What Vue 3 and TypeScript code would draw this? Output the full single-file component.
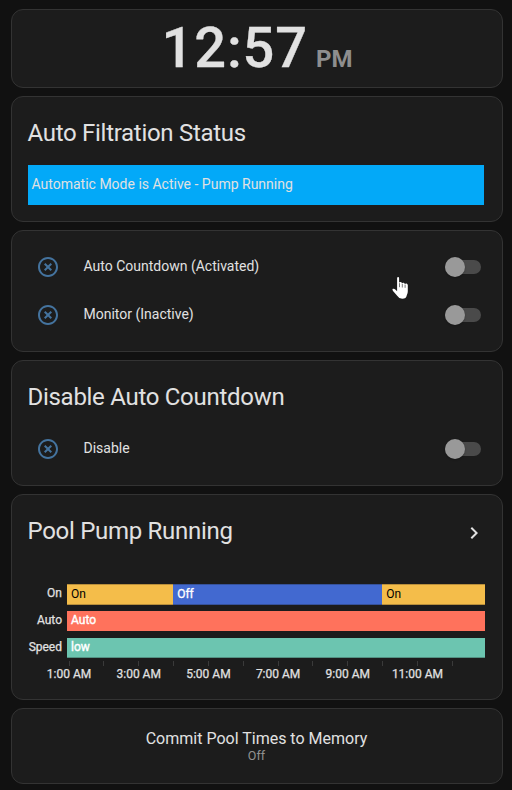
<script setup lang="ts">
interface ToggleRow {
  label: string
}
interface Segment {
  state: string
  span: number
  tone: string
}
interface Track {
  name: string
  segments: Segment[]
}

const filtrationRows: ToggleRow[] = [
  { label: 'Auto Countdown (Activated)' },
  { label: 'Monitor (Inactive)' },
]
const disableRows: ToggleRow[] = [{ label: 'Disable' }]

const tracks: Track[] = [
  {
    name: 'On',
    segments: [
      { state: 'On', span: 25.4, tone: 'amber' },
      { state: 'Off', span: 50, tone: 'blue' },
      { state: 'On', span: 24.6, tone: 'amber' },
    ],
  },
  { name: 'Auto', segments: [{ state: 'Auto', span: 100, tone: 'coral' }] },
  { name: 'Speed', segments: [{ state: 'low', span: 100, tone: 'teal' }] },
]

const ticks: string[] = [
  '1:00 AM', '', '3:00 AM', '', '5:00 AM', '', '7:00 AM', '', '9:00 AM', '', '11:00 AM', '',
]

const closeCircle =
  'M12,20C7.59,20 4,16.41 4,12C4,7.59 7.59,4 12,4C16.41,4 20,7.59 20,12C20,16.41 16.41,20 12,20M12,2C6.47,2 2,6.47 2,12C2,17.53 6.47,22 12,22C17.53,22 22,17.53 22,12C22,6.47 17.53,2 12,2M14.59,8L12,10.59L9.41,8L8,9.41L10.59,12L8,14.59L9.41,16L12,13.41L14.59,16L16,14.59L13.41,12L16,9.41L14.59,8Z'
</script>

<template>
  <main class="dashboard">
    <section class="card clock">
      <span class="time">12:57</span>
      <span class="period">PM</span>
    </section>

    <section class="card status">
      <h2 class="title">Auto Filtration Status</h2>
      <div class="banner">Automatic Mode is Active - Pump Running</div>
    </section>

    <section class="card toggles">
      <div v-for="row in filtrationRows" :key="row.label" class="row">
        <svg class="state-icon" viewBox="0 0 24 24"><path :d="closeCircle" /></svg>
        <span class="row-label">{{ row.label }}</span>
        <span class="switch"><i class="knob"></i></span>
      </div>
    </section>

    <section class="card disable">
      <h2 class="title">Disable Auto Countdown</h2>
      <div v-for="row in disableRows" :key="row.label" class="row">
        <svg class="state-icon" viewBox="0 0 24 24"><path :d="closeCircle" /></svg>
        <span class="row-label">{{ row.label }}</span>
        <span class="switch"><i class="knob"></i></span>
      </div>
    </section>

    <section class="card history">
      <header class="history-head">
        <h2 class="title">Pool Pump Running</h2>
        <svg class="chevron" viewBox="0 0 24 24">
          <path d="M8.59,16.58L13.17,12L8.59,7.41L10,6L16,12L10,18L8.59,16.58Z" />
        </svg>
      </header>
      <div class="chart">
        <div v-for="track in tracks" :key="track.name" class="track">
          <span class="track-name">{{ track.name }}</span>
          <div class="track-bar">
            <span
              v-for="(segment, i) in track.segments"
              :key="i"
              class="segment"
              :class="segment.tone"
              :style="{ width: segment.span + '%' }"
            >{{ segment.state }}</span>
          </div>
        </div>
        <div class="axis">
          <div v-for="(tick, i) in ticks" :key="i" class="tick">
            <i class="tick-mark"></i>
            <span class="tick-label">{{ tick }}</span>
          </div>
        </div>
      </div>
    </section>

    <section class="card commit">
      <span class="commit-name">Commit Pool Times to Memory</span>
      <span class="commit-state">Off</span>
    </section>

    <svg class="pointer" viewBox="0 0 18 24">
      <path
        d="M5.1 2.2Q5.1 1 6.1 1T7.1 2.2V6.6Q7.5 6 8.6 6.1T9.9 7.2Q10.6 6.5 11.6 6.8T12.9 8.1Q13.6 7.2 14.5 7.5T15.8 9.1V15.2Q15.8 17.5 14.8 19.2Q14.3 22.8 10.2 22.8Q7 22.8 5.4 20L1 14.9Q-.1 13.2 1 12.8Q2.2 12.4 3.6 13.8L5.1 15.3Z"
      />
      <path class="finger-gap" d="M7.5 7.2V11.2M10.3 7.8V11.5M13.1 8.6V11.8" />
    </svg>
  </main>
</template>

<style>
body {
  margin: 0;
  background: #111111;
}
</style>

<style scoped>
.dashboard {
  position: relative;
  box-sizing: border-box;
  width: 512px;
  height: 790px;
  padding: 9px 9px 6px 11px;
  display: flex;
  flex-direction: column;
  gap: 8px;
  overflow: hidden;
  background: #111111;
  color: #e1e1e1;
  font-family: Roboto, 'Liberation Sans', sans-serif;
  font-size: 14px;
}
.card {
  box-sizing: border-box;
  border: 1px solid #333333;
  border-radius: 12px;
  background: #1c1c1c;
}
.title {
  margin: 0 0 0 -0.5px;
  font-size: 24px;
  font-weight: 400;
  line-height: 32px;
  letter-spacing: -0.288px;
}
.clock {
  height: 79px;
  display: flex;
  justify-content: center;
  align-items: baseline;
  gap: 8px;
}
.time {
  font-size: 56px;
  font-weight: 500;
  line-height: 76px;
  letter-spacing: 0.9px;
  -webkit-text-stroke: 0.3px #e1e1e1;
}
.period {
  font-size: 24px;
  font-weight: 700;
  color: #8e8e8e;
}
.status {
  height: 126px;
  padding: 20px 18px 0 16px;
}
.banner {
  height: 40px;
  margin-top: 16px;
  padding-left: 3.5px;
  box-sizing: border-box;
  background: #03a9f8;
  line-height: 38px;
}
.toggles {
  height: 122px;
  padding: 16px;
  display: flex;
  flex-direction: column;
  gap: 8px;
}
.row {
  height: 40px;
  display: flex;
  align-items: center;
  padding: 0 5px 0 8px;
}
.state-icon {
  width: 24px;
  height: 24px;
  fill: #44739e;
}
.row-label {
  flex: 1;
  margin-left: 23.5px;
  line-height: 20px;
  padding-bottom: 2px;
}
.switch {
  width: 36px;
  height: 14px;
  display: flex;
  align-items: center;
  border-radius: 7px;
  background: #4a4a4a;
}
.knob {
  width: 20px;
  height: 20px;
  border-radius: 50%;
  background: #999999;
  box-shadow: 0 1px 2px rgba(0, 0, 0, 0.25);
}
.disable {
  height: 126px;
  padding: 20px 16px 0;
}
.disable .row {
  margin-top: 16px;
}
.history {
  height: 206px;
  padding: 20px 17px 0 16px;
}
.history-head {
  display: flex;
  justify-content: space-between;
  align-items: center;
}
.chevron {
  width: 24px;
  height: 24px;
  margin: 4px -1px 0 0;
  fill: #e1e1e1;
}
.chart {
  margin-top: 37px;
  font-size: 12px;
}
.track {
  height: 20.5px;
  margin-bottom: 6.3px;
  display: flex;
}
.track-name {
  width: 34px;
  margin-right: 5px;
  display: flex;
  justify-content: flex-end;
  line-height: 19px;
  -webkit-text-stroke: 0.25px #e1e1e1;
}
.track-bar {
  flex: 1;
  display: flex;
}
.segment {
  flex: none;
  box-sizing: border-box;
  padding-left: 4px;
  line-height: 20px;
  white-space: nowrap;
  overflow: hidden;
  color: #ffffff;
}
.amber {
  background: #f4bd4a;
  color: #000000;
  box-shadow: inset 0 1px #b98f3b, inset 0 -1px #b98f3b;
}
.blue {
  background: #4269d0;
  box-shadow: inset 0 1px #36529b, inset 0 -1px #36529b;
  -webkit-text-stroke: 0.3px #ffffff;
}
.coral {
  background: #ff725c;
  line-height: 19px;
  -webkit-text-stroke: 0.4px #ffffff;
}
.teal {
  background: #6cc5b0;
  box-shadow: inset 0 -1px #529182;
  line-height: 19px;
  -webkit-text-stroke: 0.4px #ffffff;
}
.axis {
  margin: -3.4px 0 0 23.6px;
  display: flex;
  height: 24px;
}
.tick {
  flex: 0 0 34.85px;
  min-width: 0;
  display: flex;
  flex-direction: column;
  align-items: center;
}
.tick-mark {
  width: 1px;
  height: 5px;
  flex: none;
  background: #3a3a3a;
}
.tick-label {
  line-height: 16px;
  white-space: nowrap;
  -webkit-text-stroke: 0.25px #e1e1e1;
}
.commit {
  height: 76px;
  display: flex;
  flex-direction: column;
  align-items: center;
  padding-top: 20px;
}
.commit-name {
  margin-right: 1px;
  font-size: 16px;
  line-height: 19px;
}
.commit-state {
  margin-right: 1px;
  font-size: 12.5px;
  line-height: 15px;
  color: #919191;
}
.pointer {
  position: absolute;
  left: 392px;
  top: 276px;
  width: 18px;
  height: 24px;
  fill: #ffffff;
}
.finger-gap {
  fill: none;
  stroke: #1c1c1c;
  stroke-width: 0.6;
}
</style>
